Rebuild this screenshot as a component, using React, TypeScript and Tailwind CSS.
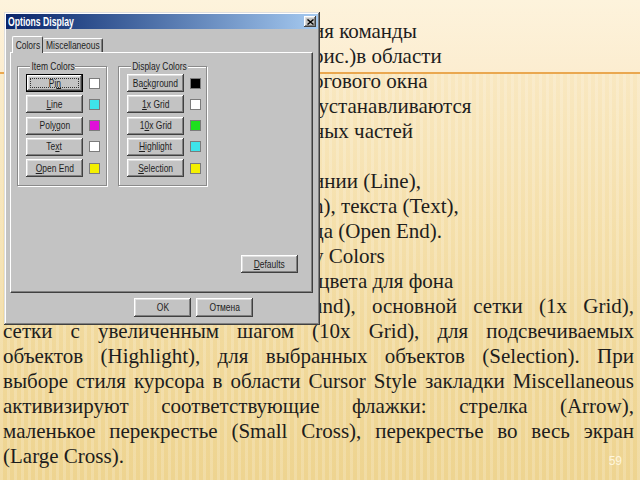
import type { ReactNode } from 'react';

const topLines: string[] = [
  'ия команды',
  'рис.)в области',
  'огового окна',
  '\u00a0устанавливаются',
  'ных частей',
  '',
  'инии (Line),',
  'n), текста (Text),',
  'да (Open End).',
  'y Colors',
  '\u00a0цвета для фона',
];

const fullLines = [
  'сетки с увеличенным шагом (10x Grid), для подсвечиваемых',
  'объектов (Highlight), для выбранных объектов (Selection). При',
  'выборе стиля курсора в области Cursor Style закладки Miscellaneous',
  'активизируют соответствующие флажки: стрелка (Arrow),',
  'маленькое перекрестье (Small Cross), перекрестье во весь экран',
];

const raised =
  'shadow-[inset_-1px_-1px_#404040,inset_1px_1px_#ffffff,inset_-2px_-2px_#808080,inset_2px_2px_#dfdfdf]';

function Label({ children }: { children: ReactNode }) {
  return <span className="inline-block scale-x-[0.77] whitespace-nowrap">{children}</span>;
}

function WinButton({ children, isDefault = false, tall = false }: { children: ReactNode; isDefault?: boolean; tall?: boolean }) {
  if (isDefault) {
    return (
      <div className="h-[18px] w-[57px] border border-black bg-[#c3c3c3]">
        <div className={`flex h-full w-full items-center justify-center p-[3px] ${raised}`}>
          <div className="flex h-full w-full items-center justify-center border border-dotted border-[#333] leading-none">
            <Label>{children}</Label>
          </div>
        </div>
      </div>
    );
  }
  return (
    <div className={`flex w-[57px] items-center justify-center bg-[#c3c3c3] leading-none ${tall ? 'h-[19px]' : 'h-[18px]'} ${raised}`}>
      <Label>{children}</Label>
    </div>
  );
}

function Swatch({ color }: { color: string }) {
  return <div className={`h-[11px] w-[11px] border border-[#7b7b7b] ${color}`} />;
}

function Group({ title, titleFix, rows, width }: { title: string; titleFix: string; rows: [ReactNode, string, boolean][]; width: string }) {
  return (
    <fieldset className={`${width} border border-[#8a8a8a] pb-[8px] pl-[8px] pt-[2px] shadow-[1px_1px_0_#ffffff,inset_1px_1px_0_#ffffff]`}>
      <legend className="ml-[4px] bg-[#c3c3c3] px-[1px] text-[11px] leading-[12px] text-[#222]">
        <span className={`inline-block scale-x-[0.77] whitespace-nowrap ${titleFix}`}>{title}</span>
      </legend>
      <div className="flex flex-col gap-[3.3px]">
        {rows.map(([label, color, def], i) => (
          <div key={i} className="flex items-center gap-[6px]">
            <WinButton isDefault={def}>{label}</WinButton>
            <Swatch color={color} />
          </div>
        ))}
      </div>
    </fieldset>
  );
}

function OptionsDialog() {
  return (
    <div
      className={`absolute left-[4px] top-[12px] flex h-[313px] w-[316px] flex-col bg-[#c3c3c3] p-[2px] font-['Liberation_Sans',Arial,sans-serif] text-[11px] text-[#1e1e1e] shadow-[inset_-1px_-1px_#404040,inset_1px_1px_#dfdfdf,inset_-2px_-2px_#808080,inset_2px_2px_#ffffff]`}
    >
      <div className="flex h-[15px] items-center justify-between bg-linear-to-r from-[#0a246a] to-[#a6caf0] pl-[2px] pr-[2px]">
        <span className="inline-block origin-left scale-x-[0.72] whitespace-nowrap text-[12px] font-bold leading-none text-white">
          Options Display
        </span>
        <div className={`flex h-[11px] w-[12px] items-center justify-center bg-[#c3c3c3] ${raised}`}>
          <svg width="7" height="6" viewBox="0 0 7 6">
            <path d="M0.5 0.5 L6.5 5.5 M6.5 0.5 L0.5 5.5" stroke="#000" strokeWidth="1.4" />
          </svg>
        </div>
      </div>

      <div className="relative z-10 ml-[6px] mt-[7px] flex h-[16px] items-end">
        <div className="-mb-[1px] flex h-[17px] w-[31px] items-center justify-center rounded-t-[2px] border-l border-r border-t border-l-white border-r-[#404040] border-t-white bg-[#c3c3c3]">
          <Label>Colors</Label>
        </div>
        <div className="flex h-[14px] w-[60px] items-center justify-center rounded-t-[2px] border-r border-t border-r-[#404040] border-t-white shadow-[inset_-1px_0_#808080]">
          <Label>Miscellaneous</Label>
        </div>
      </div>

      <div className="ml-[4px] mr-[5px] flex h-[241px] flex-col border border-b-[#404040] border-l-white border-r-[#404040] border-t-white pl-[6px] pt-[7px] shadow-[inset_-1px_-1px_#808080]">
        <div className="flex gap-[11px]">
          <Group
            title="Item Colors"
            titleFix="-mx-[6.5px]"
            width="w-[90px]"
            rows={[
              [<>Pi<u>n</u></>, 'bg-[#ffffff]', true],
              [<><u>L</u>ine</>, 'bg-[#3ee4ea]', false],
              [<>Pol<u>y</u>gon</>, 'bg-[#e010d8]', false],
              [<>Te<u>x</u>t</>, 'bg-[#ffffff]', false],
              [<><u>O</u>pen End</>, 'bg-[#f4f000]', false],
            ]}
          />
          <Group
            title="Display Colors"
            titleFix="-mx-[8px]"
            width="w-[89px]"
            rows={[
              [<>Ba<u>c</u>kground</>, 'bg-[#000000]', false],
              [<><u>1</u>x Grid</>, 'bg-[#ffffff]', false],
              [<>1<u>0</u>x Grid</>, 'bg-[#1ee01e]', false],
              [<><u>H</u>ighlight</>, 'bg-[#3ee4ea]', false],
              [<><u>S</u>election</>, 'bg-[#f4f000]', false],
            ]}
          />
        </div>
        <div className="flex-1" />
        <div className="mb-[19px] mr-[14px] self-end">
          <WinButton>
            <u>D</u>efaults
          </WinButton>
        </div>
      </div>

      <div className="ml-[128px] mt-[5px] flex gap-[5px]">
        <WinButton tall>OK</WinButton>
        <WinButton tall>Отмена</WinButton>
      </div>
    </div>
  );
}

export default function App() {
  return (
    <div
      className={`relative h-[480px] w-[640px] overflow-hidden [background:linear-gradient(to_bottom,transparent_72px,#eaa850_72px,#eaa850_74px,transparent_74px),linear-gradient(to_bottom,#fdf3dc_0px,#fcedd0_72px,transparent_72px),repeating-linear-gradient(90deg,rgba(255,255,255,0.18)_0px,rgba(255,255,255,0.18)_3px,rgba(0,0,0,0)_3px,rgba(0,0,0,0)_7px),linear-gradient(to_bottom,#fbeccb_0%,#f8e6bc_22%,#f5e0ac_45%,#f1d99c_70%,#eed490_100%)]`}
    >
      <div className="flex flex-col pl-[3px] pr-[6px] pt-[19px] font-['Liberation_Serif','Times_New_Roman',serif] text-[21px] leading-[25px] text-[#1d1d1d]">
        {topLines.map((line, i) => (
          <div key={i} className="h-[25px] whitespace-nowrap pl-[310px]">
            {line}
          </div>
        ))}
        <div className="h-[25px] pl-[309px] text-justify [text-align-last:justify]">und), основной сетки (1x Grid),</div>
        {fullLines.map((line, i) => (
          <div key={i} className="h-[25px] text-justify [text-align-last:justify]">
            {line}
          </div>
        ))}
        <div className="flex h-[25px] items-end justify-between">
          <span>(Large Cross).</span>
          <span className="mb-[1px] mr-[12px] font-['Liberation_Sans',Arial,sans-serif] text-[12px] leading-[14px] text-[#fff6dc]">59</span>
        </div>
      </div>
      <OptionsDialog />
    </div>
  );
}
